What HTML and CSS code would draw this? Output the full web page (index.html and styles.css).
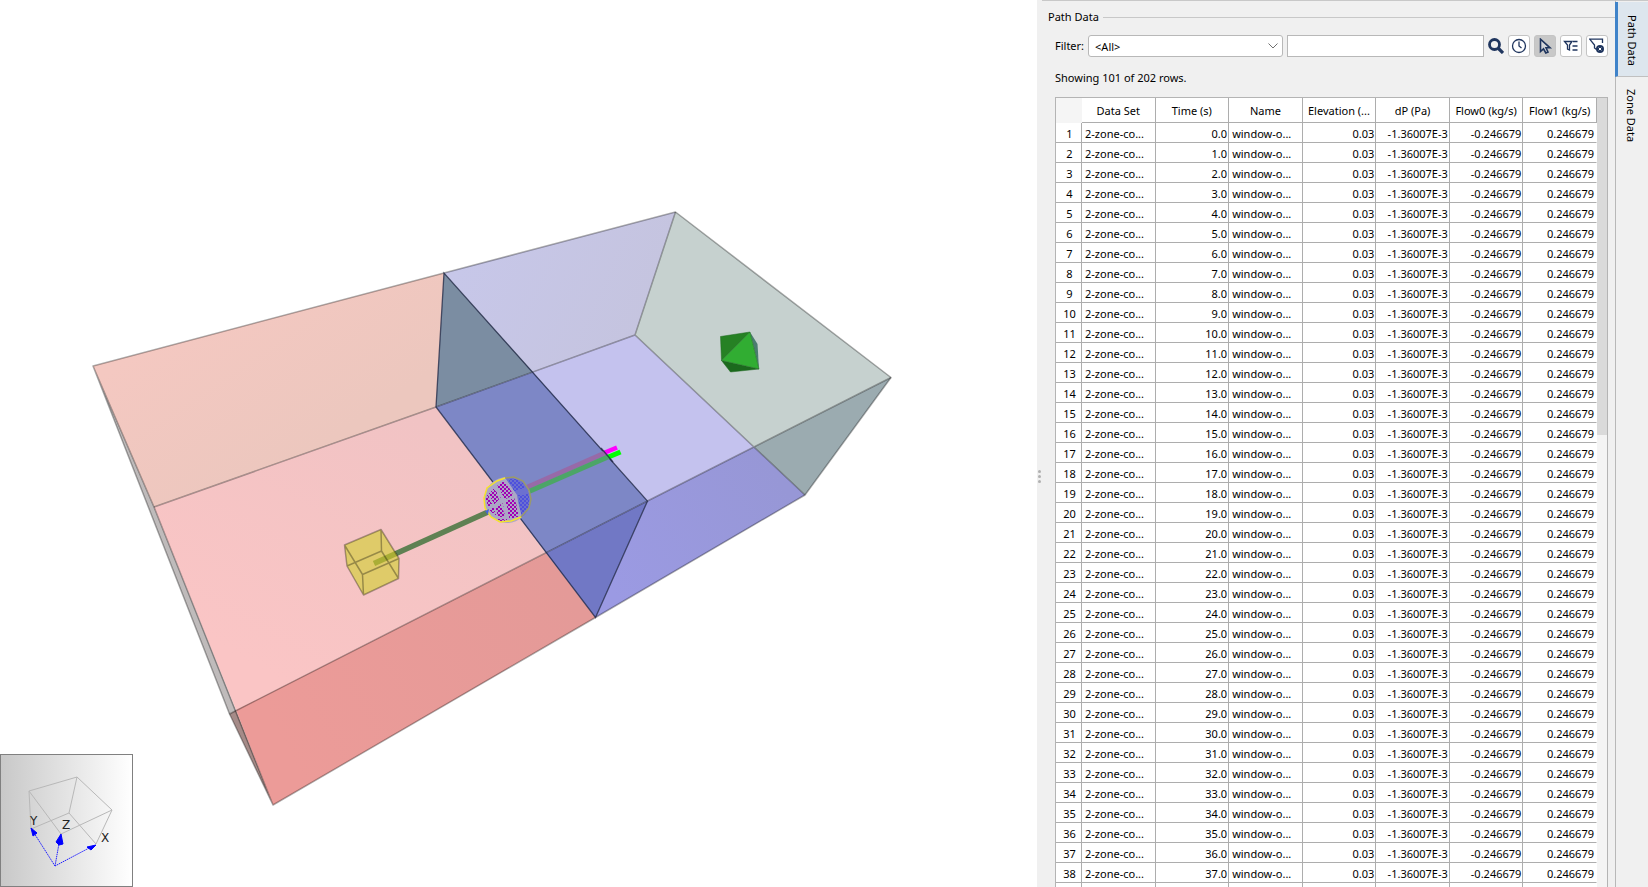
FILE: index.html
```html
<!DOCTYPE html>
<html lang="en">
<head>
<meta charset="utf-8">
<title>Path Data</title>
<link rel="stylesheet" href="styles.css">
</head>
<body>
<div class="app">
  <main class="viewport">
    <svg class="scene" viewBox="0 0 1037 887" role="img" aria-label="Two zone model">
      <defs>
        <linearGradient id="backRed" gradientUnits="userSpaceOnUse" x1="200" y1="310" x2="300" y2="460">
          <stop offset="0" stop-color="#f4c8c1"/><stop offset="1" stop-color="#ecc7be"/>
        </linearGradient>
        <linearGradient id="floorRed" gradientUnits="userSpaceOnUse" x1="420" y1="420" x2="280" y2="680">
          <stop offset="0" stop-color="#f1c3c4"/><stop offset="1" stop-color="#fac5c5"/>
        </linearGradient>
        <linearGradient id="frontRed" gradientUnits="userSpaceOnUse" x1="280" y1="740" x2="570" y2="590">
          <stop offset="0" stop-color="#ec9b98"/><stop offset="1" stop-color="#e49a98"/>
        </linearGradient>
        <linearGradient id="backBlue" gradientUnits="userSpaceOnUse" x1="460" y1="260" x2="640" y2="340">
          <stop offset="0" stop-color="#c7c7e9"/><stop offset="1" stop-color="#c5c4df"/>
        </linearGradient>
        <linearGradient id="frontBlue" gradientUnits="userSpaceOnUse" x1="610" y1="590" x2="780" y2="480">
          <stop offset="0" stop-color="#9b9ae3"/><stop offset="1" stop-color="#9797d6"/>
        </linearGradient>
        <pattern id="dots" width="4" height="4" patternUnits="userSpaceOnUse">
          <rect width="2" height="2" fill="#a000b4"/><rect x="2" y="2" width="2" height="2" fill="#a000b4"/>
        </pattern>
        <pattern id="dotsBlue" width="4" height="4" patternUnits="userSpaceOnUse">
          <rect width="2" height="2" fill="#4e50dc"/><rect x="2" y="2" width="2" height="2" fill="#4e50dc"/>
        </pattern>
      </defs>

      <polygon points="93,366 154,507 236,710 229.500,714" fill="#bfbbbb"/>
      <polygon points="229.500,714 236,710 273,805" fill="#a58b88"/>
      <polygon points="93,366 444,273 436,407 154,507" fill="url(#backRed)"/>
      <polygon points="154,507 436,407 546,553 236,710" fill="url(#floorRed)"/>
      <polygon points="236,710 546,553 595.500,617.500 273,805" fill="url(#frontRed)"/>
      <polygon points="444,273 675.500,212 635,335 533,372" fill="url(#backBlue)"/>
      <polygon points="533,372 635,335 754,447 647.500,501" fill="#c4c2ee"/>
      <polygon points="647.500,501 754,447 805,495 595.500,617.500" fill="url(#frontBlue)"/>
      <polygon points="675.500,212 891,377.500 754,447 635,335" fill="#c6d1cf"/>
      <polygon points="754,447 891,377.500 805,495" fill="#9babb0"/>
      <polygon points="444,273 533,372 436,407" fill="#7b8da2"/>
      <polygon points="436,407 533,372 647.500,501 546,553" fill="#7d87c6"/>
      <polygon points="546,553 647.500,501 595.500,617.500" fill="#7178c5"/>

      <g class="edge">
        <path d="M93 366L444 273L675.500 212L891 377.500L805 495L595.500 617.500L273 805L154 507L93 366L229.500 714L273 805"/>
        <path d="M154 507L436 407L635 335L675.500 212M635 335L805 495M229.500 714L647.500 501L891 377.500"/>
      </g>
      <path class="edge-dark" d="M444 273L436 407L595.500 617.500L647.500 501Z"/>

      <path d="M521 490L606 452.500" stroke="#976aa8" stroke-width="5"/>
      <path d="M529 491.500L609 456.500" stroke="#4ca567" stroke-width="5"/>
      <path d="M605 452.500L617 447.500" stroke="#ff00ff" stroke-width="4.500"/>
      <path d="M608.500 457L620.500 452" stroke="#00ff00" stroke-width="5"/>
      <path class="edge-dark" d="M601 448L613 462"/>
      <path d="M395 554L488 512" stroke="#5f8153" stroke-width="5.500"/>

      <polygon points="344.500,545 381,529.500 399,558.500 398.500,578.500 363.500,595 347,566" fill="#dfcb69"/>
      <path d="M374 563.500L396 553.500" stroke="#aaae36" stroke-width="5.500"/>
      <g class="edge">
        <path d="M344.500 545L381 529.500L399 558.500L398.500 578.500L363.500 595L347 566ZM344.500 545L362.500 574.500L399 558.500M362.500 574.500L363.500 595M347 566L381.500 551L381 529.500M381.500 551L398.500 578.500"/>
      </g>

      <circle cx="507" cy="500" r="23" fill="#ada6c6"/>
      <path d="M505 478Q529 476 530 500Q530 512 521 518L517 495Z" fill="#6c70d0"/>
      <g shape-rendering="crispEdges">
        <path d="M508 479Q521 478 526 488L514 491ZM518 495L529 494Q531 509 521 515Z" fill="url(#dotsBlue)"/>
        <path d="M497 485L504 481L513 492L512 498L505 499ZM489 493L494 489L501 498L494 504ZM506 501L516 498L518 517L509 518ZM496 507L503 503L505 516L498 517ZM486 498L488 494L492 504L488 507ZM489 510L493 507L496 515ZM497 519L508 519L502 522Z" fill="url(#dots)"/>
      </g>
      <path d="M504 478L513 492Q518 504 521 518M486 510L516 495M496 483Q499 502 509 520" fill="none" stroke="#aaa8c5" stroke-width="2"/>
      <path d="M520 518L529 508L531 499L529 490L523 481L514 477L505 478" fill="none" stroke="#9a9a6a" stroke-width="1.500"/>
      <path d="M505 478L497 481L487 488L484 498L485 508L491 517L500 522L511 521L521 517" fill="none" stroke="#f5e32c" stroke-width="1.500"/>
      <path d="M485 511L489 509L488 515Z" fill="#4664d8"/>

      <polygon points="750,332 757.500,344 759,369" fill="#4b7c70"/>
      <polygon points="720.500,336.500 750,332 721.500,360.500" fill="#268124"/>
      <polygon points="750,332 759,369 721.500,360.500" fill="#31ad32"/>
      <polygon points="721.500,360.500 759,369 730.500,372" fill="#1b691d"/>
      <path d="M720.500 336.500L750 332L759 369L730.500 372L721.500 360.500ZM750 332L721.500 360.500L759 369" fill="none" stroke="#1f6a20" stroke-opacity=".65" stroke-width=".8"/>
    </svg>

    <svg class="gizmo" viewBox="0 0 133 133" role="img" aria-label="Axes">
      <defs>
        <linearGradient id="gizmoBg"><stop offset="0" stop-color="#c8c8c8"/><stop offset="1" stop-color="#fff"/></linearGradient>
      </defs>
      <rect x=".5" y=".5" width="132" height="132" fill="url(#gizmoBg)" stroke="#808080"/>
      <path d="M31 75L29 37L77 23L112 56L61 80L29 37M77 23L69 59L31 75M69 59L96 90L112 56" fill="none" stroke="#b8b8b8"/>
      <path d="M55 112L34 79M55 112L60 84M55 112L91 93" fill="none" stroke="#2020ff" stroke-dasharray="1.500 .7"/>
      <path d="M31 74L37 79L33 82ZM61 80L63 90L59 91L56 88ZM96 91L91 96L87 93Z" fill="#00f" stroke="#00f"/>
      <text x="30" y="71">Y</text><text x="62" y="75">Z</text><text x="101" y="88">X</text>
    </svg>
  </main>

  <div class="splitter" role="separator"><i></i><i></i><i></i></div>

  <section class="panel">
    <h1 class="group-title">Path Data</h1>
    <div class="body">
      <form class="filter">
        <label for="filter">Filter:</label>
        <span class="combo">
          <select id="filter"><option>&lt;All&gt;</option></select>
          <svg viewBox="0 0 10 6" aria-hidden="true"><path d="M.5 .5L5 5L9.500 .5"/></svg>
        </span>
        <input class="query" type="text" aria-label="Filter text">
        <button class="search" type="button" aria-label="Search">
          <svg viewBox="0 0 16 16"><circle cx="6.500" cy="6.500" r="5" stroke-width="2.800"/><path d="M10.500 10.500L15 15" stroke-width="3.200"/></svg>
        </button>
        <button class="tool" type="button" aria-label="Time">
          <svg viewBox="0 0 16 16"><circle cx="8" cy="8" r="6.500"/><path d="M8 3.500V8L10.500 10"/></svg>
        </button>
        <button class="tool active" type="button" aria-label="Select" aria-pressed="true">
          <svg viewBox="0 0 16 16"><path d="M3.500 1.200V13.500L6.500 10.800L8.800 15L11 14L9 9.800H13Z" fill="#d4d6da" stroke-width="1.600"/></svg>
        </button>
        <button class="tool" type="button" aria-label="Filter list">
          <svg viewBox="0 0 16 16"><path d="M1.500 3.500H9L6.500 7V12L4.500 11V7ZM10 3.500H14.500M9.500 8H14.500M9.500 12H14.500"/></svg>
        </button>
        <button class="tool" type="button" aria-label="Clear filter">
          <svg viewBox="0 0 16 16"><path d="M13.500 5V1.200H.7L5.500 7V10L7.500 11.500"/><circle cx="11" cy="11" r="4" fill="#1f355e" stroke="none"/><path d="M9.700 9.700L12.300 12.300M12.300 9.700L9.700 12.300" stroke="#fff" stroke-width="1"/></svg>
        </button>
      </form>
      <p class="count">Showing 101 of 202 rows.</p>
      <div class="grid">
        <div class="grid-view">
          <table>
            <thead>
              <tr><td class="corner"></td><th>Data Set</th><th>Time (s)</th><th>Name</th><th>Elevation (...</th><th>dP (Pa)</th><th>Flow0 (kg/s)</th><th>Flow1 (kg/s)</th></tr>
            </thead>
            <tbody id="rows"></tbody>
          </table>
        </div>
        <div class="scrollbar"><div class="thumb"></div></div>
      </div>
    </div>
  </section>

  <nav class="tabs" role="tablist">
    <button class="tab selected" type="button" role="tab" aria-selected="true">Path Data</button>
    <button class="tab" type="button" role="tab" aria-selected="false">Zone Data</button>
  </nav>
</div>
<script src="rows.js"></script>
</body>
</html>
```
FILE: styles.css
```css
* { box-sizing: border-box; }
body {
  margin: 0;
  background: #fff;
  color: #000;
  font: 11px/16px "Noto Sans", "Open Sans", sans-serif;
}
button, input, select { font: inherit; color: inherit; }

.app { display: flex; height: 100vh; overflow: hidden; }

.viewport { position: relative; flex: 1; min-width: 0; }
.scene { display: block; width: 100%; height: 100%; }
.edge { fill: none; stroke: #000; stroke-opacity: .32; stroke-width: 1.5; stroke-linejoin: round; }
.edge-dark { fill: none; stroke: #1c2340; stroke-opacity: .75; stroke-width: 1.3; }
.gizmo { position: absolute; left: 0; bottom: 0; width: 133px; height: 133px; }
.gizmo text { font: 12px "DejaVu Sans", sans-serif; fill: #222; }

.splitter {
  display: flex; flex-direction: column; justify-content: center; align-items: center; gap: 2px;
  width: 5px; padding-top: 66px; background: #f0f0f0;
}
.splitter i { width: 3px; height: 3px; border-radius: 50%; background: #b0b0b0; }

.panel {
  display: flex; flex-direction: column;
  width: 573px; padding: 8px 0 0 6px;
  background: #f0f0f0; border-top: 1px solid #c8c8c8;
}
.group-title { display: flex; align-items: center; gap: 4px; margin: 0; font-size: 11px; font-weight: 400; line-height: 16px; }
.group-title::after { content: ""; flex: 1; height: 1px; background: #c8c8c8; }
.body { display: flex; flex-direction: column; flex: 1; min-height: 0; padding: 10px 7px 0; }

.filter { display: flex; align-items: center; gap: 4px; }
.combo { position: relative; width: 195px; height: 22px; }
.combo select {
  appearance: none; width: 100%; height: 22px; padding: 1px 6px 0;
  border: 1px solid #b8b8b8; border-radius: 3px; background: #fff;
}
.combo svg { position: absolute; right: 5px; top: 8px; width: 10px; height: 6px; fill: none; stroke: #707070; pointer-events: none; }
.query { flex: 1; min-width: 0; height: 22px; border: 1px solid #b8b8b8; border-radius: 0; background: #fff; }
.filter button { flex: none; height: 22px; padding: 0; display: flex; align-items: center; justify-content: center; }
.filter button svg { width: 16px; height: 16px; fill: none; stroke: #1f355e; stroke-width: 1.3; }
.filter .search { width: 16px; border: 0; background: none; }
.filter .tool { width: 22px; border: 1px solid #c4c4c4; border-radius: 3px; background: #fff; }
.filter .tool.active { background: #c8c8c8; }

.count { margin: 13px 0 11px; }

.grid { display: flex; flex: 1; min-height: 0; border: 1px solid #b4b4b4; border-bottom: 0; background: #fff; }
.grid-view { flex: 1; min-width: 0; overflow: hidden; }
table { width: 100%; table-layout: fixed; border-collapse: separate; border-spacing: 0; }
th, td { border: solid #adadad; border-width: 0 1px 1px 0; padding: 0; font-weight: 400; white-space: nowrap; text-align: center; }
thead th, thead td { height: 25px; line-height: 19px; }
.corner { width: 26px; background: #f5f5f5; border-color: #f5f5f5; }
tbody th, tbody td { height: 20px; padding: 2px 1px 0 3px; line-height: 17px; }
tbody td { text-align: right; }
tbody td.text { text-align: left; }
tbody td:last-child { padding-right: 2px; border-right-color: #fff; }
.scrollbar { width: 10px; background: #f4f4f4; }
.thumb { width: 10px; height: 337px; background: #dadada; }

.tabs { width: 33px; padding-top: 1px; border-top: 1px solid #c8c8c8; border-left: 1px solid #b8b8b8; background: #f0f0f0; }
.tab {
  display: flex; align-items: center; justify-content: center;
  width: 33px; height: 75px; margin-left: -1px; padding: 2px 2px 0 0;
  border: 0; background: none; writing-mode: vertical-rl;
}
.tab.selected { background: #dde6ee; border-left: 3px solid #3f83c9; border-bottom: 1px solid #c0c0c0; }
```
FILE: rows.js
```js
const body = document.getElementById("rows");
for (let i = 0; i < 38; i++) {
  const row = body.insertRow();
  row.innerHTML =
    `<th scope="row">${i + 1}</th><td class="text">2-zone-co...</td><td>${i}.0</td>` +
    `<td class="text">window-o...</td><td>0.03</td><td>-1.36007E-3</td>` +
    `<td>-0.246679</td><td>0.246679</td>`;
}
// Blank row that carries the column lines down to the window edge.
body.insertRow().innerHTML = "<td></td>".repeat(8);
```
